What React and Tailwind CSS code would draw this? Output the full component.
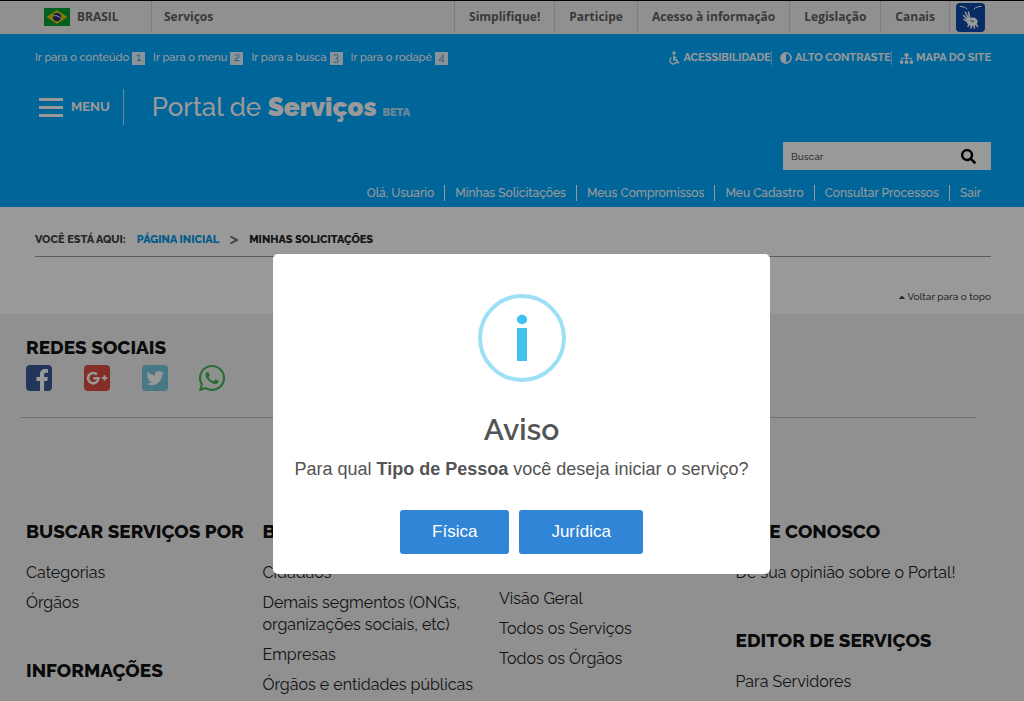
import { FaAdjust, FaCaretUp, FaSearch, FaSitemap, FaWhatsapp } from "react-icons/fa";

const skipLinks = ["Ir para o conteúdo", "Ir para o menu", "Ir para a busca", "Ir para o rodapé"];

const govLinks = ["Simplifique!", "Participe", "Acesso à informação", "Legislação", "Canais"];

const userLinks = [
  "Olá, Usuario",
  "Minhas Solicitações",
  "Meus Compromissos",
  "Meu Cadastro",
  "Consultar Processos",
  "Sair",
];

const footerColumns = [
  [
    { title: "BUSCAR SERVIÇOS POR", items: ["Categorias", "Órgãos"] },
    { title: "INFORMAÇÕES", items: [] },
  ],
  [
    {
      title: "BUSCAR POR",
      items: [
        "Cidadãos",
        "Demais segmentos (ONGs, organizações sociais, etc)",
        "Empresas",
        "Órgãos e entidades públicas",
      ],
    },
  ],
  [{ items: ["Visão Geral", "Todos os Serviços", "Todos os Órgãos"] }],
  [
    { title: "FALE CONOSCO", items: ["Dê sua opinião sobre o Portal!"] },
    { title: "EDITOR DE SERVIÇOS", items: ["Para Servidores"] },
  ],
];

function BrazilFlag() {
  return (
    <svg viewBox="0 0 26 18" className="h-[18px] w-[26px]" aria-hidden="true">
      <rect width="26" height="18" fill="#00a038" />
      <path d="M13 2 23.5 9 13 16 2.500 9Z" fill="#e8c800" />
      <circle cx="13" cy="9" r="4.300" fill="#22307c" />
      <path d="M9 8c3-1 6 0 8 2.500" fill="none" stroke="#fff" strokeWidth="1" />
    </svg>
  );
}

function HandsIcon() {
  return (
    <svg viewBox="0 0 29 29" className="size-[29px]" aria-hidden="true">
      <rect width="29" height="29" rx="4" fill="#0b49a8" />
      <g fill="none" stroke="#fff" strokeLinecap="round">
        <path d="M4 3.500c3 0 5 .5 7 2.500M25 3.500c-3 0-5 .5-7 2.500" strokeWidth="1" />
        <path
          d="M11 16 7.500 12.500M12 14.500 9.500 9.500M13.500 14 12.500 9M11 18l-3-1.500M13 21l-1 2.500M15.500 22.500l-.5 2.500M18 22.500l.5 2.500M20 21l1.500 2.500"
          strokeWidth="1.500"
        />
      </g>
      <path d="M10.500 15c1-1.500 3-1.500 4.500 0 2-1 5.500 0 6.500 2.500.5 2.500-1 5-3.500 5.500-2 .3-4 0-5.500-1.500-2-1.500-3-4-2-6.500Z" fill="#fff" />
      <path d="M14.500 17.500c1 1 2.500 1 3.500.5" fill="none" stroke="#0b49a8" strokeWidth="1" />
    </svg>
  );
}

function WheelchairIcon() {
  return (
    <svg viewBox="0 0 12 14" className="h-[14px] w-3" fill="none" stroke="currentColor" aria-hidden="true">
      <circle cx="6" cy="2" r="1.700" fill="currentColor" stroke="none" />
      <path d="M5.800 4.500v4.300H8.500l1.300 3 1.500-.4M5.800 6.400H8.500" strokeWidth="1.500" />
      <path d="M3.800 6.500a3.400 3.400 0 1 0 4.600 4.300" strokeWidth="1.300" />
    </svg>
  );
}

function FacebookIcon() {
  return (
    <svg viewBox="0 0 26 26" className="size-[26px]" aria-hidden="true">
      <rect width="26" height="26" rx="4" fill="#3b5998" />
      <path
        d="M14 26V16h-3.500v-4H14V9.300C14 5.800 16.200 4 19.200 4c1.400 0 2.300.1 2.800.2v3.600h-2c-1.600 0-1.900.8-1.900 1.900V12h3.700l-.5 4h-3.200v10Z"
        fill="#fff"
      />
    </svg>
  );
}

function GooglePlusIcon() {
  return (
    <svg viewBox="0 0 26 26" className="size-[26px]" aria-hidden="true">
      <rect width="26" height="26" rx="4" fill="#dc4e41" />
      <path d="M13 9.500A5.200 5.200 0 1 0 14.500 13.300H9.300" fill="none" stroke="#fff" strokeWidth="2.500" />
      <path d="M20.500 10.300v5.400M17.800 13h5.400" stroke="#fff" strokeWidth="1.800" />
    </svg>
  );
}

function TwitterIcon() {
  return (
    <svg viewBox="0 0 26 26" className="size-[26px]" aria-hidden="true">
      <rect width="26" height="26" rx="4" fill="#76c8e0" />
      <path
        transform="translate(4.500 4.500) scale(.72)"
        d="M23.950 4.570a10 10 0 0 1-2.820.77 4.960 4.960 0 0 0 2.160-2.720c-.95.550-2 .950-3.130 1.180a4.920 4.920 0 0 0-8.380 4.480C7.690 8.090 4.070 6.130 1.640 3.160a4.820 4.820 0 0 0-.67 2.480c0 1.710.87 3.210 2.190 4.100a4.900 4.900 0 0 1-2.230-.62v.06a4.920 4.920 0 0 0 3.950 4.830 5 5 0 0 1-2.210.08 4.940 4.940 0 0 0 4.600 3.420A9.870 9.870 0 0 1 0 19.540a13.990 13.990 0 0 0 7.550 2.210c9.050 0 14-7.500 14-13.980 0-.21 0-.42-.02-.63a9.940 9.940 0 0 0 2.420-2.570Z"
        fill="#fff"
      />
    </svg>
  );
}

function GovBar() {
  return (
    <div className="flex h-[34px] items-stretch justify-between border-t border-black bg-[#f1f1f1] pr-[39px] pb-px font-['Open_Sans',sans-serif] text-xs font-bold text-[#606060]">
      <div className="flex">
        <a href="#brasil" className="flex w-[152px] items-center gap-[7px] border-r border-[#d0d0d0] pl-11 font-bold">
          <BrazilFlag />
          BRASIL
        </a>
        <a href="#servicos" className="flex items-center px-3">
          Serviços
        </a>
      </div>
      <nav className="flex">
        {govLinks.map((link) => (
          <a key={link} href="#gov" className="flex items-center border-l border-[#d0d0d0] px-[14px]">
            {link}
          </a>
        ))}
        <a href="#libras" aria-label="Conteúdo em Libras" className="flex items-center border-l border-[#d0d0d0] pl-[6px]">
          <HandsIcon />
        </a>
      </nav>
    </div>
  );
}

function Header() {
  return (
    <header className="bg-[#00a8ff] pr-[33px] pl-[35px] text-white">
      <div className="flex h-12 items-center justify-between">
        <nav className="flex gap-2 text-[11px] font-medium">
          {skipLinks.map((link, i) => (
            <a key={link} href="#pular" className="flex items-center gap-[3px]">
              {link}
              <span className="flex h-[13px] w-[13px] items-center justify-center bg-white/90 font-normal text-[#2f8fc4]">
                {i + 1}
              </span>
            </a>
          ))}
        </nav>
        <nav className="flex gap-2 text-[11px] leading-3 font-bold">
          <a href="#acessibilidade" className="flex items-center gap-[3px] border-r border-white/50">
            <WheelchairIcon />
            ACESSIBILIDADE
          </a>
          <a href="#contraste" className="flex items-center gap-[3px] border-r border-white/50">
            <FaAdjust className="size-3" />
            ALTO CONTRASTE
          </a>
          <a href="#mapa" className="flex items-center gap-[3px]">
            <FaSitemap className="size-[13px]" />
            MAPA DO SITE
          </a>
        </nav>
      </div>

      <div className="flex h-[50px] items-center">
        <button type="button" className="flex h-9 items-center gap-2 border-r border-white/70 pr-[13px] pl-1 text-[13px] font-bold">
          <span className="flex w-6 flex-col gap-[5px]">
            <span className="h-[3px] bg-white" />
            <span className="h-[3px] bg-white" />
            <span className="h-[3px] bg-white" />
          </span>
          MENU
        </button>
        <a href="#inicio" className="flex items-baseline pl-7">
          <span className="text-[26px] leading-8 font-medium">
            Portal de <strong className="font-black">Serviços</strong>
          </span>
          <span className="pl-[6px] text-[11px] font-black text-white/70">BETA</span>
        </a>
      </div>

      <form className="mt-[10px] ml-auto flex h-7 w-52 items-center bg-white pr-[15px] pl-2">
        <input
          type="text"
          aria-label="Buscar"
          placeholder="Buscar"
          className="min-w-0 flex-1 text-[10px] font-medium outline-none placeholder:text-[#555]"
        />
        <button type="button" aria-label="Pesquisar" className="text-black">
          <FaSearch className="size-[15px]" />
        </button>
      </form>

      <nav className="flex h-[37px] items-center justify-end pt-2 text-xs leading-4 font-medium">
        {userLinks.map((link) => (
          <a key={link} href="#usuario" className="border-r border-white px-[10px] last:border-r-0">
            {link}
          </a>
        ))}
      </nav>
    </header>
  );
}

function Breadcrumb() {
  return (
    <div className="bg-white pr-[33px] pl-[35px]">
      <nav className="flex h-[50px] items-center border-b border-[#999] pt-[17px] text-[11px] font-extrabold">
        <span className="text-[#444]">VOCÊ ESTÁ AQUI:</span>
        <a href="#inicio" className="pl-[11px] text-[#0096e6]">
          PÁGINA INICIAL
        </a>
        <svg viewBox="0 0 8 8" className="mx-[11px] size-2" fill="none" stroke="#666" strokeWidth="1.700" aria-hidden="true">
          <path d="M.5 .5 7 4 .5 7.500" />
        </svg>
        <span className="text-[#222]">MINHAS SOLICITAÇÕES</span>
      </nav>
      <div className="flex h-[57px] items-center justify-end pt-[22px]">
        <a href="#topo" className="flex items-center text-[10px] font-medium text-[#444]">
          <FaCaretUp className="size-[10px]" />
          Voltar para o topo
        </a>
      </div>
    </div>
  );
}

function Footer() {
  return (
    <footer className="flex-1 bg-[#f0f0f0] pr-12 pl-[21px] text-[#222]">
      <div className="border-b border-[#bbb] px-[5px] pt-5 pb-[26px]">
        <h2 className="text-[19px] leading-[26px] font-extrabold text-[#111]">REDES SOCIAIS</h2>
        <div className="mt-[5px] flex h-[26px] items-center gap-8">
          <a href="#facebook" aria-label="Facebook">
            <FacebookIcon />
          </a>
          <a href="#google" aria-label="Google+">
            <GooglePlusIcon />
          </a>
          <a href="#twitter" aria-label="Twitter">
            <TwitterIcon />
          </a>
          <a href="#whatsapp" aria-label="WhatsApp" className="-ml-[3px]">
            <FaWhatsapp className="size-[30px] text-[#43b854]" />
          </a>
        </div>
      </div>
      <div className="grid grid-cols-4 pt-[100px] pr-1 pl-[5px]">
        {footerColumns.map((column, i) => (
          <div key={i} className="flex flex-col gap-[43px]">
            {column.map((group, j) => (
              <section key={j}>
                {group.title ? (
                  <h2 className="text-[19px] leading-[26px] font-extrabold whitespace-nowrap text-[#111]">{group.title}</h2>
                ) : (
                  <div className="h-[52px]" />
                )}
                {group.items.length > 0 && (
                  <ul className="mt-[18px] flex flex-col gap-2 text-base leading-[22px]">
                    {group.items.map((item) => (
                      <li key={item}>
                        <a href="#rodape">{item}</a>
                      </li>
                    ))}
                  </ul>
                )}
              </section>
            ))}
          </div>
        ))}
      </div>
    </footer>
  );
}

function NoticeModal() {
  return (
    <div className="fixed inset-0 flex items-start justify-center bg-black/40 pt-[254px] pl-[19px]">
      <div
        role="dialog"
        aria-modal="true"
        aria-labelledby="aviso"
        className="flex w-[497px] flex-col items-center rounded-[5px] bg-white px-5 pt-10 pb-5 text-[#545454]"
      >
        <svg viewBox="0 0 88 88" className="size-[88px]" aria-hidden="true">
          <circle cx="44" cy="44" r="42" fill="none" stroke="#9de0f6" strokeWidth="4" />
          <ellipse cx="44" cy="25.500" rx="5.200" ry="4.700" fill="#3fc3ee" />
          <path d="M39 34h10v33H39Z" fill="#3fc3ee" />
        </svg>
        <h2 id="aviso" className="mt-7 text-[30px] leading-10 font-semibold">
          Aviso
        </h2>
        <p className="mt-[7px] font-['Liberation_Sans',Arial,sans-serif] text-lg leading-6">
          Para qual <strong>Tipo de Pessoa</strong> você deseja iniciar o serviço?
        </p>
        <div className="mt-[29px] flex gap-[10px] font-['Liberation_Sans',Arial,sans-serif] text-[17px] text-white">
          <button type="button" className="h-11 rounded-[3px] bg-[#3085d6] px-8">
            Física
          </button>
          <button type="button" className="h-11 rounded-[3px] bg-[#3085d6] px-8">
            Jurídica
          </button>
        </div>
      </div>
    </div>
  );
}

export default function App() {
  return (
    <div className="flex min-h-screen flex-col font-[Raleway,Lato,sans-serif]">
      <GovBar />
      <Header />
      <Breadcrumb />
      <Footer />
      <NoticeModal />
    </div>
  );
}
